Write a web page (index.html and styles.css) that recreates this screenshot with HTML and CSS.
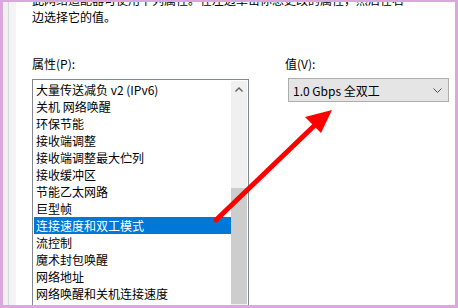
FILE: index.html
```html
<!DOCTYPE html>
<html lang="zh-CN">
<head>
<meta charset="utf-8">
<title>属性</title>
<link rel="stylesheet" href="styles.css">
</head>
<body>
<div class="frame">
  <div class="gutter"><div class="g1"></div><div class="g2"></div><div class="g3"></div></div>
  <div class="content">
    <p class="desc">此网络适配器可使用下列属性。在左边单击你想更改的属性，然后在右<br>边选择它的值。</p>
    <div class="cols">
      <div class="col-prop">
        <div class="label">属性(P):</div>
        <div class="listbox">
          <ul class="items">
            <li>大量传送减负 v2 (IPv6)</li>
            <li>关机 网络唤醒</li>
            <li>环保节能</li>
            <li>接收端调整</li>
            <li>接收端调整最大伫列</li>
            <li>接收缓冲区</li>
            <li>节能乙太网路</li>
            <li>巨型帧</li>
            <li class="selected">连接速度和双工模式</li>
            <li>流控制</li>
            <li>魔术封包唤醒</li>
            <li>网络地址</li>
            <li>网络唤醒和关机连接速度</li>
            <li>样式比对唤醒</li>
          </ul>
          <div class="scrollbar">
            <div class="sb-up"><svg width="8" height="5" viewBox="0 0 8 5"><polyline points="0.5,4.5 4,1 7.5,4.5" fill="none" stroke="#606060" stroke-width="1.4"/></svg></div>
            <div class="sb-track"></div>
            <div class="sb-thumb"></div>
          </div>
        </div>
      </div>
      <div class="col-val">
        <div class="label">值(V):</div>
        <div class="combo"><span>1.0 Gbps 全双工</span><svg width="9" height="5" viewBox="0 0 9 5"><polyline points="0.5,0.5 4.5,4.5 8.5,0.5" fill="none" stroke="#505050" stroke-width="1"/></svg></div>
      </div>
    </div>
  </div>
  <svg class="arrow" width="458" height="308" viewBox="0 0 458 308">
    <line x1="216" y1="220" x2="316" y2="124" stroke="#ff0000" stroke-width="5" stroke-linecap="round"/>
    <polygon points="332,110 305,117 321,133" fill="#ff0000"/>
  </svg>
</div>
</body>
</html>
```
FILE: styles.css
```css
html, body {
  margin: 0;
  padding: 0;
  background: #fff;
}
body {
  width: 458px;
  height: 308px;
  overflow: hidden;
  font-family: "Noto Sans CJK SC", "Noto Sans", sans-serif;
  font-size: 12px;
  color: #000;
}
.frame {
  position: relative;
  box-sizing: border-box;
  width: 458px;
  height: 308px;
  border: 3px solid #daa8dc;
  border-top-width: 2px;
  display: flex;
  overflow: hidden;
  background: #fff;
}
.gutter {
  flex: none;
  display: flex;
  width: 13px;
}
.g1 { width: 5px; background: #f0f0f0; }
.g2 { width: 1px; background: #d9d9d9; }
.g3 { width: 7px; background: #f4f4f4; }
.content {
  flex: 1;
  min-width: 0;
  padding-left: 16px;
}
.desc {
  margin: -11px 0 0;
  line-height: 17px;
  white-space: nowrap;
}
.cols {
  display: flex;
  margin-top: 30px;
}
.col-prop {
  width: 217px;
  flex: none;
}
.col-val {
  margin-left: 36px;
}
.label {
  height: 17px;
  line-height: 17px;
}
.listbox {
  margin-top: 7px;
  border: 1px solid #828790;
  padding: 1px;
  display: flex;
  height: 300px;
}
.items {
  list-style: none;
  margin: 0;
  padding: 0;
  flex: 1;
  min-width: 0;
}
.items li {
  height: 17px;
  line-height: 17px;
  padding-left: 2px;
  white-space: nowrap;
}
.items li.selected {
  background: #0078d7;
  color: #fff;
}
.scrollbar {
  width: 16px;
  flex: none;
  display: flex;
  flex-direction: column;
  background: #f0f0f0;
}
.sb-up {
  height: 17px;
  display: flex;
  align-items: center;
  justify-content: center;
}
.sb-track {
  height: 90px;
}
.sb-thumb {
  height: 116px;
  background: #cdcdcd;
}
.combo {
  margin-top: 6px;
  margin-left: 3px;
  width: 161px;
  height: 24px;
  box-sizing: border-box;
  border: 1px solid #adadad;
  background: #e5e5e5;
  display: flex;
  align-items: center;
  justify-content: space-between;
  padding: 0 6px 0 4px;
  white-space: nowrap;
}
.arrow {
  position: absolute;
  left: -3px;
  top: -2px;
  pointer-events: none;
}
```
